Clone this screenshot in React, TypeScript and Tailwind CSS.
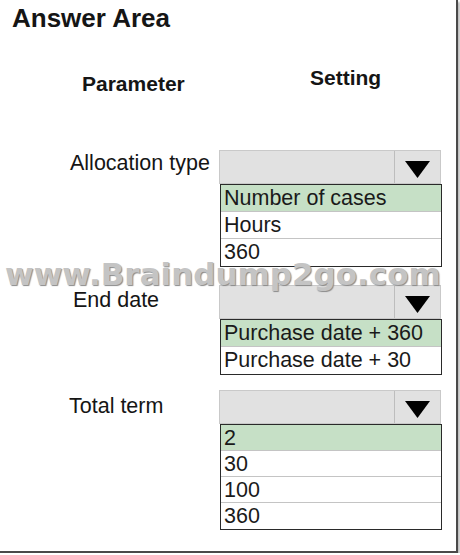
const sections = [
  {
    label: "Allocation type",
    labelPad: "pl-[70px]",
    labelTop: "mt-[1px]",
    gap: "mt-[54px]",
    rowH: "h-[27px]",
    options: ["Number of cases", "Hours", "360"],
  },
  {
    label: "End date",
    labelPad: "pl-[73px]",
    labelTop: "mt-[3px]",
    gap: "mt-[18px]",
    rowH: "h-[27px]",
    options: ["Purchase date + 360", "Purchase date + 30"],
  },
  {
    label: "Total term",
    labelPad: "pl-[69px]",
    labelTop: "mt-[4px]",
    gap: "mt-[15px]",
    rowH: "h-[26px]",
    options: ["2", "30", "100", "360"],
  },
];

function Dropdown({ options, rowH }: { options: string[]; rowH: string }) {
  return (
    <div className="w-[223px]">
      <div className="flex h-[34px] w-[222px] border border-[#c9c9c9] bg-[#e1e1e1]">
        <div className="flex-1 border-r border-[#bdbdbd]" />
        <div className="flex w-[45px] items-center justify-center pt-[4px]">
          <svg width="25" height="17" viewBox="0 0 25 17">
            <polygon points="0,0 25,0 12.5,17" fill="#000" />
          </svg>
        </div>
      </div>
      <div className="ml-[1px] w-[222px] border border-[#2a2a2a] bg-white">
        {options.map((opt, i) => (
          <div
            key={opt}
            className={`${rowH} pl-[3px] text-[21.5px] leading-[27px] text-[#1a1a1a] ${
              i === 0 ? "bg-[#c6e0c6]" : ""
            } ${i < options.length - 1 ? "border-b border-[#c4c4c4]" : ""}`}
          >
            {opt}
          </div>
        ))}
      </div>
    </div>
  );
}

export default function App() {
  return (
    <div className="relative h-[553px] w-[458px] border-r-2 border-b-2 border-[#4a4a4a] bg-white font-['Liberation_Sans',Arial,sans-serif] text-[#151515] shadow-[2px_2px_2px_#bdbdbd]">
      <div className="pl-[12px] pt-[3px] text-[26px] font-bold leading-[30px]">Answer Area</div>

      <div className="relative mt-[39px] flex text-[21px] font-bold leading-[24px]">
        <div className="pl-[70px]">
          <span className="ml-[12px]">Parameter</span>
        </div>
        <div className="absolute left-[310px] top-[-6px]">Setting</div>
      </div>

      {sections.map((s) => (
        <div key={s.label} className={`flex ${s.gap}`}>
          <div className={`w-[219px] ${s.labelPad} ${s.labelTop} text-[21.5px] leading-[24px]`}>{s.label}</div>
          <Dropdown options={s.options} rowH={s.rowH} />
        </div>
      ))}

      <div className="pointer-events-none absolute left-[5px] top-[256px] font-['DejaVu_Sans',sans-serif] text-[31px] font-bold leading-[36px] text-[#c4c4c4] [text-shadow:1px_1px_1px_#8a8a8a]">
        www.Braindump2go.com
      </div>
    </div>
  );
}
